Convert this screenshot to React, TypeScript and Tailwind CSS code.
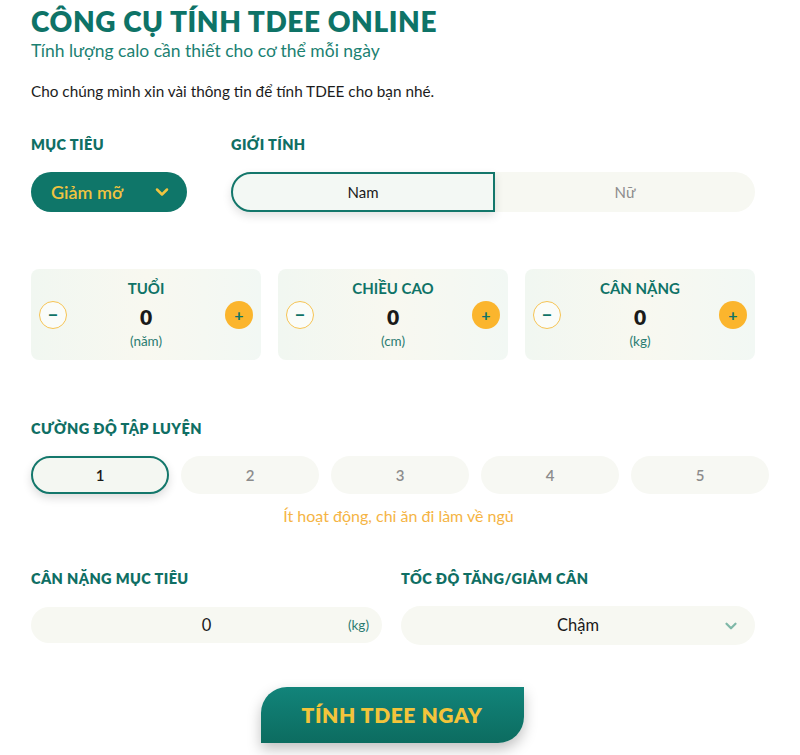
import React, { useState } from 'react';

const font = { fontFamily: 'Lato, "Noto Sans", sans-serif' };

function Stepper({ label, unit }: { label: string; unit: string }) {
  const [value, setValue] = useState(0);
  return (
    <div className="h-[91px] flex-1 rounded-lg bg-gradient-to-r from-[#f1f7f1] via-[#f8f8f0] to-[#f2f8f4] px-2 pt-[9px]">
      <div className="text-center text-[15px] font-bold leading-5 text-[#0f7367]">{label}</div>
      <div className="flex items-center justify-between">
        <button
          onClick={() => setValue(Math.max(0, value - 1))}
          className="flex h-7 w-7 items-center justify-center rounded-full border border-[#f6c454] bg-white/60 text-[18px] font-bold leading-none text-[#0f7367]"
        >
          −
        </button>
        <div className="pt-[5px] text-[21px] font-extrabold leading-7 text-[#1a1a1a]">{value}</div>
        <button
          onClick={() => setValue(value + 1)}
          className="flex h-7 w-7 items-center justify-center rounded-full bg-[#fbb52d] text-[16px] font-bold leading-none text-[#0f7367]"
        >
          +
        </button>
      </div>
      <div className="mt-[2px] text-center text-[13.5px] leading-4 text-[#2b7c71]">({unit})</div>
    </div>
  );
}

function Chevron({ className }: { className: string }) {
  return (
    <svg viewBox="0 0 24 24" className={className} fill="none" stroke="currentColor" strokeWidth={3} strokeLinecap="round" strokeLinejoin="round">
      <path d="M6 9l6 6 6-6" />
    </svg>
  );
}

export default function App() {
  const [gender, setGender] = useState('Nam');
  const [level, setLevel] = useState(1);

  return (
    <div className="min-h-screen bg-white px-[31px] pt-[3px]" style={font}>
      <h1 className="text-[28px] font-extrabold leading-9 tracking-[0.6px] text-[#0e7367]">CÔNG CỤ TÍNH TDEE ONLINE</h1>
      <p className="text-[17.5px] leading-6 text-[#1b8172]">Tính lượng calo cần thiết cho cơ thể mỗi ngày</p>
      <p className="mt-[18px] text-[15.3px] leading-5 text-[#1c1c1c]">Cho chúng mình xin vài thông tin để tính TDEE cho bạn nhé.</p>

      <div className="mt-[34px] flex w-[724px] gap-[44px]">
        <div className="w-[156px]">
          <div className="text-[14.5px] font-extrabold leading-5 tracking-[0.4px] text-[#0f6f64]">MỤC TIÊU</div>
          <button className="mt-[17px] flex h-10 w-[156px] items-center justify-between rounded-full bg-[#0f7669] pl-[20px] pr-[15px] text-[18px] font-semibold text-[#f1c440]">
            Giảm mỡ
            <Chevron className="h-5 w-5" />
          </button>
        </div>
        <div className="flex-1">
          <div className="text-[14.5px] font-extrabold leading-5 tracking-[0.4px] text-[#0f6f64]">GIỚI TÍNH</div>
          <div className="mt-[17px] flex h-10 rounded-full bg-[#f7f8f2]">
            {['Nam', 'Nữ'].map((g, i) => (
              <button
                key={g}
                onClick={() => setGender(g)}
                className={
                  (i === 0 ? 'rounded-l-full ' : 'rounded-r-full ') +
                  (gender === g
                    ? 'flex-1 border-2 border-[#13776b] bg-[#f3f8f4] text-[15px] text-[#1a1a1a] shadow-[0_4px_10px_rgba(0,0,0,0.12)]'
                    : 'flex-1 text-[15px] text-[#8d8d8d]')
                }
              >
                {g}
              </button>
            ))}
          </div>
        </div>
      </div>

      <div className="mt-[57px] flex w-[724px] gap-[17px]">
        <Stepper label="TUỔI" unit="năm" />
        <Stepper label="CHIỀU CAO" unit="cm" />
        <Stepper label="CÂN NẶNG" unit="kg" />
      </div>

      <div className="mt-[59px] text-[14.5px] font-extrabold leading-5 tracking-[0.4px] text-[#0f6f64]">CƯỜNG ĐỘ TẬP LUYỆN</div>
      <div className="mt-[17px] flex w-[739px] gap-3">
        {[1, 2, 3, 4, 5].map((n) => (
          <button
            key={n}
            onClick={() => setLevel(n)}
            className={
              level === n
                ? 'h-[38px] w-[138px] rounded-full border-2 border-[#13776b] bg-[#f4f7f2] text-[15px] font-semibold text-[#1a1a1a] shadow-[0_4px_10px_rgba(0,0,0,0.14)]'
                : 'h-[38px] w-[138px] rounded-full bg-[#f7f8f3] text-[15px] font-semibold text-[#8c8c8c]'
            }
          >
            {n}
          </button>
        ))}
      </div>
      <p className="mt-[12px] w-[735px] text-center text-[16px] leading-5 text-[#f5b444]">Ít hoạt động, chỉ ăn đi làm về ngủ</p>

      <div className="mt-[43px] flex w-[724px] gap-[19px]">
        <div className="w-[351px]">
          <div className="text-[14.5px] font-extrabold leading-5 tracking-[0.4px] text-[#0f6f64]">CÂN NẶNG MỤC TIÊU</div>
          <div className="relative mt-[18px] flex h-9 items-center justify-center rounded-full bg-[#f7f8f2]">
            <span className="text-[16.5px] text-[#1a1a1a]">0</span>
            <span className="absolute right-[13px] text-[13.5px] text-[#2b7c71]">(kg)</span>
          </div>
        </div>
        <div className="flex-1">
          <div className="text-[14.5px] font-extrabold leading-5 tracking-[0.4px] text-[#0f6f64]">TỐC ĐỘ TĂNG/GIẢM CÂN</div>
          <div className="relative mt-[17px] flex h-[39px] items-center justify-center rounded-full bg-[#f7f8f2]">
            <span className="text-[16.5px] text-[#1a1a1a]">Chậm</span>
            <Chevron className="absolute right-[15px] h-[18px] w-[18px] text-[#7fb8a8]" />
          </div>
        </div>
      </div>

      <div className="mt-[42px] flex w-[724px] justify-center pr-[2px]">
        <button className="h-[56px] w-[263px] rounded-tl-[26px] rounded-br-[26px] bg-gradient-to-b from-[#12847a] to-[#0c6c60] text-[21px] font-extrabold tracking-[0.6px] text-[#f3c43b] shadow-[0_6px_14px_rgba(0,0,0,0.25)]">
          TÍNH TDEE NGAY
        </button>
      </div>
    </div>
  );
}
